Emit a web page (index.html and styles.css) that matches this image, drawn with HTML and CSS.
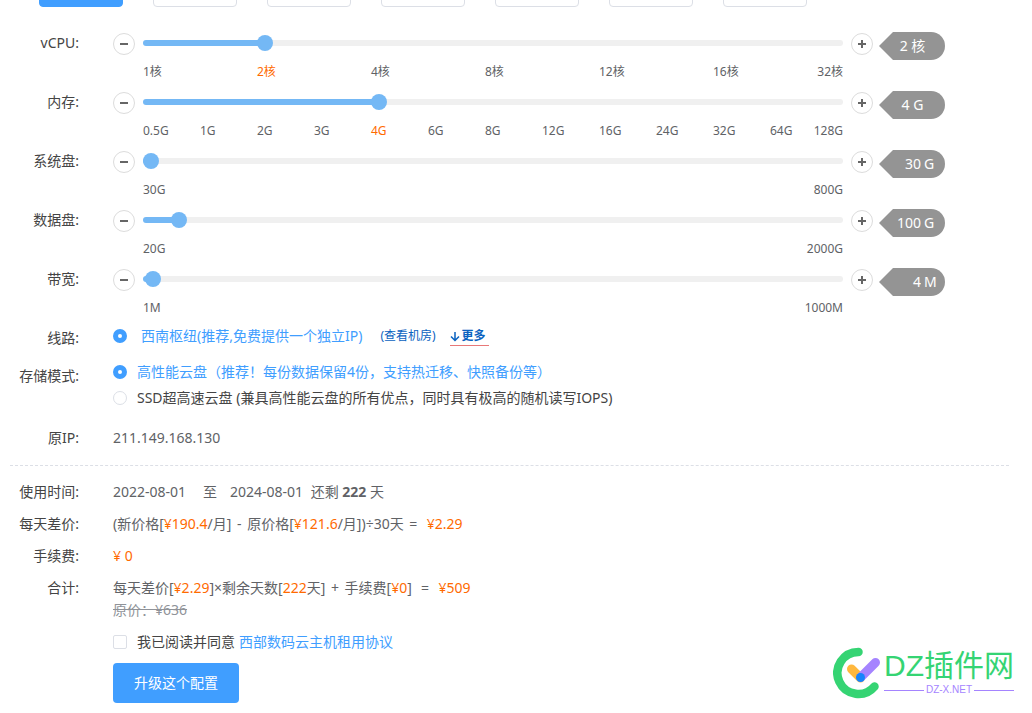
FILE: index.html
```html
<!DOCTYPE html>
<html lang="zh-CN">
<head>
<meta charset="utf-8">
<title>升级配置</title>
<link rel="stylesheet" href="styles.css">
</head>
<body>
<main class="page">
  <div class="plans">
    <button class="plan active" type="button"></button>
    <button class="plan" type="button"></button>
    <button class="plan" type="button"></button>
    <button class="plan" type="button"></button>
    <button class="plan" type="button"></button>
    <button class="plan" type="button"></button>
    <button class="plan" type="button"></button>
  </div>

  <form>
    <div class="row slider-row">
      <label class="label" for="cpu">vCPU:</label>
      <button class="step" type="button" aria-label="减少"><svg viewBox="0 0 20 20"><path d="M6 10h8"/></svg></button>
      <div class="slider">
        <input id="cpu" type="range" min="0" max="6" value="1" style="--p:0.1667">
        <div class="ticks"><span>1核</span><span class="on">2核</span><span>4核</span><span>8核</span><span>12核</span><span>16核</span><span>32核</span></div>
      </div>
      <button class="step" type="button" aria-label="增加"><svg viewBox="0 0 20 20"><path d="M6 10h8M10 6v8"/></svg></button>
      <output class="tag" for="cpu">2 核</output>
    </div>
    <div class="row slider-row">
      <label class="label" for="mem">内存:</label>
      <button class="step" type="button" aria-label="减少"><svg viewBox="0 0 20 20"><path d="M6 10h8"/></svg></button>
      <div class="slider">
        <input id="mem" type="range" min="0" max="12" value="4" style="--p:0.3333">
        <div class="ticks"><span>0.5G</span><span>1G</span><span>2G</span><span>3G</span><span class="on">4G</span><span>6G</span><span>8G</span><span>12G</span><span>16G</span><span>24G</span><span>32G</span><span>64G</span><span>128G</span></div>
      </div>
      <button class="step" type="button" aria-label="增加"><svg viewBox="0 0 20 20"><path d="M6 10h8M10 6v8"/></svg></button>
      <output class="tag" for="mem">4 G</output>
    </div>
    <div class="row slider-row">
      <label class="label" for="sys">系统盘:</label>
      <button class="step" type="button" aria-label="减少"><svg viewBox="0 0 20 20"><path d="M6 10h8"/></svg></button>
      <div class="slider">
        <input id="sys" type="range" min="30" max="800" value="30" style="--p:0">
        <div class="ticks"><span>30G</span><span>800G</span></div>
      </div>
      <button class="step" type="button" aria-label="增加"><svg viewBox="0 0 20 20"><path d="M6 10h8M10 6v8"/></svg></button>
      <div class="tag editable"><input type="text" value="30" aria-label="系统盘容量"><span>G</span></div>
    </div>
    <div class="row slider-row">
      <label class="label" for="data">数据盘:</label>
      <button class="step" type="button" aria-label="减少"><svg viewBox="0 0 20 20"><path d="M6 10h8"/></svg></button>
      <div class="slider">
        <input id="data" type="range" min="20" max="2000" value="100" style="--p:0.0404">
        <div class="ticks"><span>20G</span><span>2000G</span></div>
      </div>
      <button class="step" type="button" aria-label="增加"><svg viewBox="0 0 20 20"><path d="M6 10h8M10 6v8"/></svg></button>
      <div class="tag editable"><input type="text" value="100" aria-label="数据盘容量"><span>G</span></div>
    </div>
    <div class="row slider-row">
      <label class="label" for="band">带宽:</label>
      <button class="step" type="button" aria-label="减少"><svg viewBox="0 0 20 20"><path d="M6 10h8"/></svg></button>
      <div class="slider">
        <input id="band" type="range" min="1" max="1000" value="4" style="--p:0.003">
        <div class="ticks"><span>1M</span><span>1000M</span></div>
      </div>
      <button class="step" type="button" aria-label="增加"><svg viewBox="0 0 20 20"><path d="M6 10h8M10 6v8"/></svg></button>
      <div class="tag editable"><input type="text" value="4" aria-label="带宽大小"><span>M</span></div>
    </div>

    <div class="row line-row">
      <span class="label">线路:</span>
      <div class="inline">
        <label class="choice wide"><input type="radio" name="line" checked><span>西南枢纽(推荐,免费提供一个独立IP)</span></label>
        <a class="small-link room" href="#">(查看机房)</a>
        <a class="small-link more" href="#"><svg viewBox="0 0 10 12"><path d="M5 2v8M1 6.500l4 4 4-4"/></svg>更多</a>
      </div>
    </div>
    <div class="row storage-row">
      <span class="label">存储模式:</span>
      <div class="stack">
        <label class="choice"><input type="radio" name="storage" checked><span>高性能云盘（推荐！每份数据保留4份，支持热迁移、快照备份等）</span></label>
        <label class="choice"><input type="radio" name="storage"><span>SSD超高速云盘 (兼具高性能云盘的所有优点，同时具有极高的随机读写IOPS)</span></label>
      </div>
    </div>
    <div class="row ip-row">
      <span class="label">原IP:</span>
      <span>211.149.168.130</span>
    </div>

    <div class="summary">
      <div class="row">
        <span class="label">使用时间:</span>
        <div class="period"><span class="date">2022-08-01</span><span>至</span><span><span class="date">2024-08-01</span> 还剩 <b>222</b> 天</span></div>
      </div>
      <div class="row">
        <span class="label">每天差价:</span>
        <span>(新价格[<em>¥190.4</em>/月]<span class="op"> - </span>原价格[<em>¥121.6</em>/月])÷30天<span class="op"> = </span>&nbsp;<em>¥2.29</em></span>
      </div>
      <div class="row">
        <span class="label">手续费:</span>
        <em>¥ 0</em>
      </div>
      <div class="row">
        <span class="label">合计:</span>
        <div>
          <div>每天差价[<em>¥2.29</em>]×剩余天数[<em>222</em>天]<span class="op"> + </span>手续费[<em>¥0</em>]&nbsp;<span class="op"> = </span>&nbsp;<em>¥509</em></div>
          <s>原价：¥636</s>
        </div>
      </div>
      <div class="indent agree">
        <label class="choice"><input type="checkbox"><span>我已阅读并同意</span></label>
        <a href="#">西部数码云主机租用协议</a>
      </div>
      <div class="indent"><button class="submit" type="submit">升级这个配置</button></div>
    </div>
  </form>
</main>

<div class="brand">
  <svg class="brand-mark" viewBox="0 0 48 52" fill="none" stroke-linecap="round">
    <path d="M25.500 5A21 21 0 1 0 41.500 39.500" stroke="#35d473" stroke-width="8.500"/>
    <path d="M18.500 22l9 9" stroke="#ffb83e" stroke-width="9"/>
    <path d="M28 30l14.500-14.500" stroke="#a584ff" stroke-width="9"/>
    <circle cx="27.500" cy="30.500" r="4.500" fill="#1684fc"/>
  </svg>
  <div class="brand-text">
    <div class="brand-name">DZ插件网</div>
    <div class="brand-site">DZ-X.NET</div>
  </div>
</div>
</body>
</html>
```

FILE: styles.css
```css
* { box-sizing: border-box; }

body {
  margin: 0;
  background: #fff;
  color: #606266;
  font: 14px/22px "Noto Sans", "Noto Sans CJK SC", sans-serif;
}

button, input { font: inherit; margin: 0; }
a { color: #409eff; text-decoration: none; }
em { color: #ff6a00; font-style: normal; }
s { display: block; color: #909399; }

.page { padding: 0 23px 0 10px; }

.plans {
  display: flex;
  gap: 30px;
  margin: -33px 0 23px;
  padding-left: 29px;
}
.plan {
  width: 84px;
  height: 40px;
  background: #fff;
  border: 1px solid #dcdfe6;
  border-radius: 4px;
}
.plan.active { background: #409eff; border-color: #409eff; }

.row { display: flex; align-items: flex-start; gap: 34px; }
.label {
  flex: none;
  width: 69px;
  color: #444;
  text-align: right;
  white-space: nowrap;
}

/* sliders */
.slider-row {
  gap: 0;
  height: 59px;
  padding: 2px 64px 0 0;
}
.slider-row .label { margin-right: 34px; }
.step {
  flex: none;
  width: 22px;
  height: 22px;
  margin-top: 1px;
  padding: 0;
  background: #fff;
  border: 1px solid #dcdcdc;
  border-radius: 50%;
}
.step svg {
  display: block;
  width: 20px;
  height: 20px;
  fill: none;
  stroke: #666;
  stroke-width: 2;
}
.slider {
  flex: 1;
  min-width: 0;
  margin: 0 8px;
  padding-top: 3px;
}
.slider input {
  display: block;
  width: 100%;
  height: 16px;
  appearance: none;
  background: none;
}
.slider input::-webkit-slider-runnable-track {
  height: 6px;
  border-radius: 3px;
  background: linear-gradient(#74b8f5, #74b8f5) 0 0 / calc(8px + (100% - 16px) * var(--p)) 100% no-repeat #f0f0f0;
}
.slider input::-webkit-slider-thumb {
  width: 16px;
  height: 16px;
  margin-top: -5px;
  appearance: none;
  background: #74b8f5;
  border-radius: 50%;
}
.ticks {
  display: flex;
  padding-top: 10px;
  font-size: 12px;
  white-space: nowrap;
}
.ticks span { flex: 1 0 0; width: 0; }
.ticks span:last-child {
  display: flex;
  flex: 0 0 16px;
  justify-content: flex-end;
}
.ticks .on { color: #ff6a00; }

.tag {
  flex: none;
  width: 66px;
  height: 28px;
  margin-left: 6px;
  padding-left: 1px;
  background: #949494;
  border-radius: 0 14px 14px 0;
  clip-path: polygon(0 50%, 14px 0, 100% 0, 100% 100%, 14px 100%);
  color: #fff;
  line-height: 28px;
  text-align: center;
}
.tag.editable { display: flex; text-align: left; }
.editable input {
  width: 41px;
  height: 28px;
  padding: 0;
  background: none;
  border: 0;
  color: #fff;
  text-align: right;
}
.editable span { padding-left: 3px; }

/* choices */
.choice {
  display: flex;
  align-items: center;
  gap: 10px;
  color: #444;
}
.choice.wide { gap: 14px; }
.choice input {
  flex: none;
  width: 14px;
  height: 14px;
  appearance: none;
  background: #fff;
  border: 1px solid #dcdfe6;
  border-radius: 2px;
}
.choice input[type="radio"] { border-radius: 50%; }
.choice input[type="radio"]:checked { border: 5px solid #409eff; }
.choice input:checked + span { color: #409eff; }

.inline { display: flex; align-items: center; }
.line-row { margin-bottom: 12px; }
.line-row .label { padding-top: 2px; }
.line-row .inline { height: 22px; }
.storage-row { margin-bottom: 18px; }
.storage-row .label { padding-top: 4px; }
.stack { display: flex; flex-direction: column; gap: 4px; }
.ip-row { margin-bottom: 16px; }

.small-link {
  color: #0a62c0;
  font-size: 12px;
  line-height: 18px;
}
.room { margin: 0 14px 0 18px; }
.more {
  display: flex;
  align-items: center;
  gap: 2px;
  padding-right: 3px;
  border-bottom: 1px solid #e87878;
  font-weight: bold;
}
.more svg {
  width: 10px;
  height: 12px;
  fill: none;
  stroke: #0a62c0;
  stroke-width: 1.5;
}

/* summary */
.summary {
  display: flex;
  flex-direction: column;
  gap: 10px;
  padding: 15px 0 10px;
  border-top: 1px dashed #dcdfe6;
}
.period { display: flex; gap: 13px; }
.date { display: inline-block; min-width: 77px; }
.op { padding: 0 2px; }
.indent { padding-left: 103px; }
.agree { display: flex; align-items: center; gap: 4px; }
.submit {
  display: block;
  height: 40px;
  padding: 0 21px;
  background: #409eff;
  border: 0;
  border-radius: 4px;
  color: #fff;
}

/* watermark in the corner */
.brand {
  position: absolute;
  right: 18px;
  top: 647px;
  display: flex;
  gap: 3px;
}
.brand-mark { width: 48px; height: 52px; }
.brand-name {
  color: #35d473;
  font: 30px/38px "Liberation Sans", "Noto Sans CJK SC", sans-serif;
  white-space: nowrap;
}
.brand-site {
  display: flex;
  align-items: center;
  gap: 2px;
  color: #a584ff;
  font: 10px/10px "Liberation Sans", sans-serif;
}
.brand-site::before, .brand-site::after {
  content: "";
  flex: 1;
  height: 1px;
  background: #a584ff;
}
```
